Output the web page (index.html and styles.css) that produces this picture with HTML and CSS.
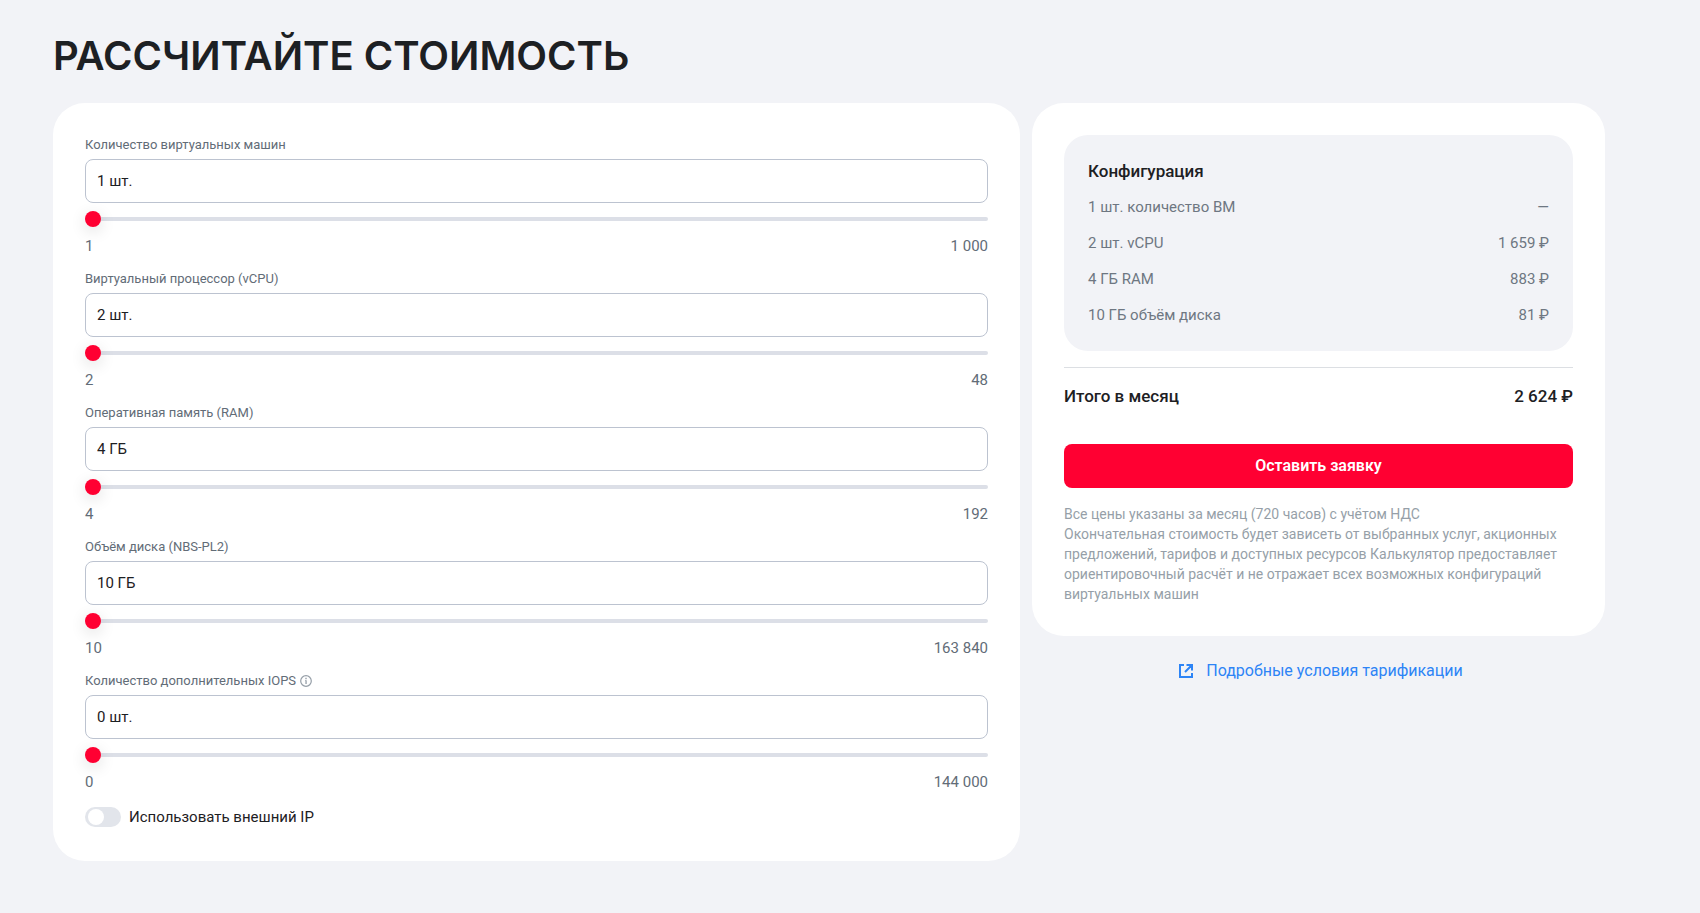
FILE: index.html
```html
<!DOCTYPE html>
<html lang="ru">
<head>
<meta charset="utf-8">
<meta name="viewport" content="width=device-width, initial-scale=1">
<title>Рассчитайте стоимость</title>
<link rel="stylesheet" href="styles.css">
</head>
<body>
<main class="page">
  <h1 class="title">РАССЧИТАЙТЕ СТОИМОСТЬ</h1>
  <div class="columns">
    <form class="card form">
      <div class="field">
        <label class="label" for="vm">Количество виртуальных машин</label>
        <input class="input" id="vm" type="text" value="1 шт.">
        <input class="slider" type="range" min="1" max="1000" value="1" aria-label="Количество виртуальных машин">
        <div class="limits"><span>1</span><span>1 000</span></div>
      </div>
      <div class="field">
        <label class="label" for="cpu">Виртуальный процессор (vCPU)</label>
        <input class="input" id="cpu" type="text" value="2 шт.">
        <input class="slider" type="range" min="2" max="48" value="2" aria-label="Виртуальный процессор (vCPU)">
        <div class="limits"><span>2</span><span>48</span></div>
      </div>
      <div class="field">
        <label class="label" for="ram">Оперативная память (RAM)</label>
        <input class="input" id="ram" type="text" value="4 ГБ">
        <input class="slider" type="range" min="4" max="192" value="4" aria-label="Оперативная память (RAM)">
        <div class="limits"><span>4</span><span>192</span></div>
      </div>
      <div class="field">
        <label class="label" for="disk">Объём диска (NBS-PL2)</label>
        <input class="input" id="disk" type="text" value="10 ГБ">
        <input class="slider" type="range" min="10" max="163840" value="10" aria-label="Объём диска (NBS-PL2)">
        <div class="limits"><span>10</span><span>163 840</span></div>
      </div>
      <div class="field">
        <label class="label" for="iops">Количество дополнительных IOPS
          <svg class="info" viewBox="0 0 12 12" aria-hidden="true">
            <circle cx="6" cy="6" r="5.3" fill="none" stroke="currentColor" stroke-width="1.2"/>
            <path d="M5.3 2.8h1.4v1.4H5.3zM5 5.2h1.7v3.9H5.4V6.1H5z" fill="currentColor"/>
          </svg>
        </label>
        <input class="input" id="iops" type="text" value="0 шт.">
        <input class="slider" type="range" min="0" max="144000" value="0" aria-label="Количество дополнительных IOPS">
        <div class="limits"><span>0</span><span>144 000</span></div>
      </div>
      <label class="switch-row"><input class="switch" type="checkbox">Использовать внешний IP</label>
    </form>

    <div class="side">
      <section class="card">
        <div class="config">
          <h2 class="config-title">Конфигурация</h2>
          <table class="config-table">
            <tr><th scope="row">1 шт. количество ВМ</th><td>—</td></tr>
            <tr><th scope="row">2 шт. vCPU</th><td>1 659 ₽</td></tr>
            <tr><th scope="row">4 ГБ RAM</th><td>883 ₽</td></tr>
            <tr><th scope="row">10 ГБ объём диска</th><td>81 ₽</td></tr>
          </table>
        </div>
        <div class="total"><span>Итого в месяц</span><span>2 624 ₽</span></div>
        <button class="submit" type="button">Оставить заявку</button>
        <p class="note">Все цены указаны за месяц (720 часов) с учётом НДС<br>Окончательная стоимость будет зависеть от выбранных услуг, акционных предложений, тарифов и доступных ресурсов Калькулятор предоставляет ориентировочный расчёт и не отражает всех возможных конфигураций виртуальных машин</p>
      </section>
      <a class="terms" href="#">
        <svg class="terms-icon" viewBox="0 0 24 24" aria-hidden="true">
          <path d="M10 6H6v12h12v-4M12.5 6H18v5.500M18 6l-7 7" fill="none" stroke="currentColor" stroke-width="2"/>
        </svg>
        Подробные условия тарификации
      </a>
    </div>
  </div>
</main>
</body>
</html>
```
FILE: styles.css
```css
* { box-sizing: border-box; }

body {
  margin: 0;
  background: #f2f3f7;
  color: #1d2023;
  font: 400 15px/24px Roboto, "Liberation Sans", sans-serif;
}

.page { padding: 32px 95px 52px 53px; }

.title {
  margin: 0 0 23px;
  font: 600 40px/48px Inter, "Liberation Sans", sans-serif;
}

.columns {
  display: grid;
  grid-template-columns: 967fr 573fr;
  gap: 12px;
  align-items: start;
}

.card {
  padding: 32px;
  border-radius: 32px;
  background: #fff;
}

.form {
  display: flex;
  flex-direction: column;
  gap: 9px;
}

.field {
  display: flex;
  flex-direction: column;
}

.label {
  display: flex;
  align-items: center;
  gap: 4px;
  margin-bottom: 4px;
  color: #626c77;
  font-size: 13px;
  line-height: 20px;
}

.info {
  width: 12px;
  height: 12px;
  color: #969fa8;
}

.input {
  width: 100%;
  height: 44px;
  margin: 0;
  padding: 0 11px;
  border: 1px solid #bcc3d0;
  border-radius: 8px;
  background: #fff;
  color: #1d2023;
  font: inherit;
}

.slider {
  appearance: none;
  width: 100%;
  height: 16px;
  margin: 8px 0;
  background: transparent;
}

.slider::-webkit-slider-runnable-track {
  height: 4px;
  border-radius: 2px;
  background: #dcdfe7;
}

.slider::-webkit-slider-thumb {
  appearance: none;
  width: 16px;
  height: 16px;
  margin-top: -6px;
  border-radius: 50%;
  background: #ff0032;
  box-shadow: 0 4px 16px rgba(0, 0, 0, 0.14);
}

.limits {
  display: flex;
  justify-content: space-between;
  padding-bottom: 2px;
  color: #626c77;
  line-height: 23px;
}

.switch-row {
  display: flex;
  align-items: center;
  gap: 8px;
  line-height: 24px;
}

.switch {
  appearance: none;
  display: flex;
  align-items: center;
  width: 36px;
  height: 20px;
  margin: 0;
  padding: 0 3px;
  border-radius: 10px;
  background: #e2e5eb;
}

.switch::before {
  content: "";
  width: 16px;
  height: 16px;
  border-radius: 50%;
  background: #fff;
}

.switch:checked { justify-content: flex-end; background: #ff0032; }

.side {
  display: flex;
  flex-direction: column;
  align-items: stretch;
  gap: 23px;
}

.config {
  padding: 24px;
  border-radius: 24px;
  background: #f2f3f7;
}

.config-title {
  margin: 0;
  font-size: 17px;
  font-weight: 500;
  line-height: 24px;
}

.config-table {
  width: 100%;
  border-collapse: collapse;
  color: #6e7782;
}

.config-table th,
.config-table td {
  padding: 12px 0 0;
  font-weight: 400;
  text-align: left;
}

.config-table td { text-align: right; }

.total {
  display: flex;
  justify-content: space-between;
  margin: 16px 0 36px;
  padding-top: 16px;
  border-top: 1px solid #dcdfe3;
  font-size: 17px;
  font-weight: 500;
}

.submit {
  display: block;
  width: 100%;
  height: 44px;
  border: 0;
  border-radius: 8px;
  background: #ff0032;
  color: #fff;
  font: 600 16px/24px Roboto, "Liberation Sans", sans-serif;
}

.note {
  margin: 16px 0 0;
  color: #969fa8;
  font-size: 14px;
  line-height: 20px;
}

.terms {
  display: flex;
  align-items: center;
  justify-content: center;
  gap: 8px;
  color: #2d84f6;
  font-size: 16px;
  text-decoration: none;
}

.terms-icon {
  width: 24px;
  height: 24px;
}
```
